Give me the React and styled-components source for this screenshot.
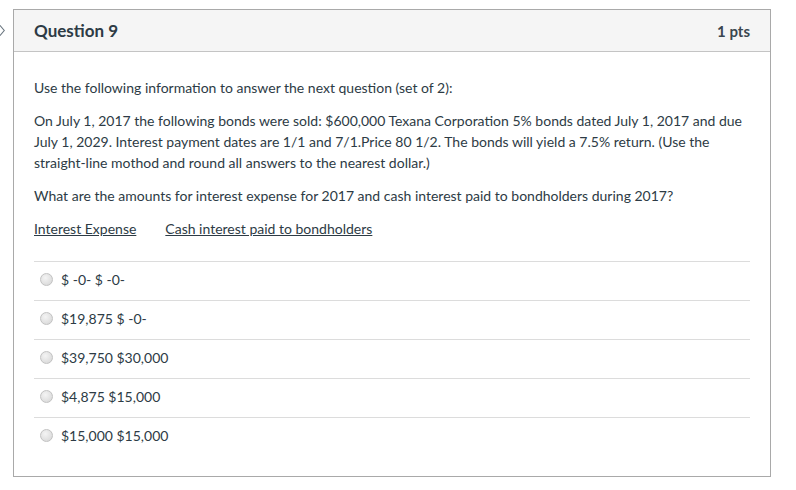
import styled, { createGlobalStyle } from "styled-components";

const GlobalStyle = createGlobalStyle`
	body {
		margin: 0;
		background: #fff;
		font-family: Lato, "Open Sans", "Liberation Sans", sans-serif;
		color: #2d3b45;
	}
`;

const answers = [
	"$ -0- $ -0-",
	"$19,875 $ -0-",
	"$39,750 $30,000",
	"$4,875 $15,000",
	"$15,000 $15,000",
];

export default function App() {
	return (
		<Page>
			<GlobalStyle />
			<Card>
				<Header>
					<Arrow viewBox="0 0 8 14">
						<path d="M1 1 L6 7 L1 13" fill="none" stroke="#6b7780" strokeWidth="1.3" />
					</Arrow>
					<Title>Question 9</Title>
					<Points>1 pts</Points>
				</Header>
				<Body>
					<Text>Use the following information to answer the next question (set of 2):</Text>
					<Text>
						On July 1, 2017 the following bonds were sold: $600,000 Texana Corporation 5% bonds dated
						July 1, 2017 and due July 1, 2029. Interest payment dates are 1/1 and 7/1.Price 80 1/2. The
						bonds will yield a 7.5% return. (Use the straight-line mothod and round all answers to the
						nearest dollar.)
					</Text>
					<Text>
						What are the amounts for interest expense for 2017 and cash interest paid to bondholders
						during 2017?
					</Text>
					<Text>
						<Label>Interest Expense</Label>
						<Label>Cash interest paid to bondholders</Label>
					</Text>
					<Answers>
						{answers.map((a) => (
							<Answer key={a}>
								<Radio />
								<span>{a}</span>
							</Answer>
						))}
					</Answers>
				</Body>
			</Card>
		</Page>
	);
}

const Page = styled.div`
	padding: 9px 0 0 13px;
	width: 758px;
`;

const Card = styled.div`
	border: 1px solid #a9a9a9;
	background: #fff;
`;

const Header = styled.div`
	position: relative;
	display: flex;
	align-items: center;
	justify-content: space-between;
	height: 41px;
	padding: 0 20px;
	background: #f5f5f5;
	border-bottom: 1px solid #c4c4c4;
`;

const Arrow = styled.svg`
	position: absolute;
	left: -15px;
	top: 14px;
	width: 7px;
	height: 13px;
`;

const Title = styled.div`
	font-size: 17px;
	font-weight: 700;
	color: #2d3b45;
	margin-bottom: 1px;
`;

const Points = styled.div`
	font-size: 15px;
	font-weight: 700;
	color: #3a464f;
`;

const Body = styled.div`
	padding: 13px 20px 20px;
`;

const Text = styled.p`
	margin: 12px 0;
	font-size: 14px;
	line-height: 21px;
`;

const Label = styled.span`
	text-decoration: underline;
	margin-right: 29px;
`;

const Answers = styled.div`
	margin-top: 22px;
`;

const Answer = styled.div`
	display: flex;
	align-items: center;
	gap: 8px;
	height: 39px;
	padding: 0 0 4px 6px;
	box-sizing: border-box;
	border-top: 1px solid #dcdcdc;
	font-size: 14px;
`;

const Radio = styled.span`
	display: inline-block;
	width: 11px;
	height: 11px;
	border-radius: 50%;
	border: 1px solid #c2c2c2;
	background: radial-gradient(circle at 40% 35%, #f4f4f4, #d4d4d4);
`;
